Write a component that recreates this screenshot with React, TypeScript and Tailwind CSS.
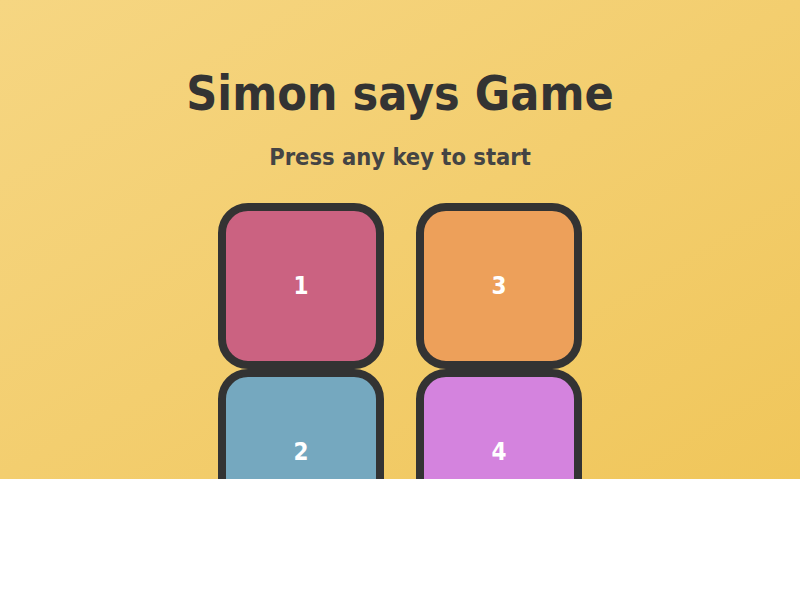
const buttons = [
  { id: 1, color: 'bg-[#cb6281]' },
  { id: 3, color: 'bg-[#eda05a]' },
  { id: 2, color: 'bg-[#75a8bf]' },
  { id: 4, color: 'bg-[#d483de]' },
];

export default function App() {
  return (
    <div
      className="h-[479px] overflow-hidden bg-gradient-to-br from-[#f6d682] to-[#f0c65a] text-center text-[#333]"
      style={{ fontFamily: '"DejaVu Sans Condensed", "DejaVu Sans", sans-serif' }}
    >
      <h1 className="pt-[67px] text-[48px] font-bold leading-[52px]">Simon says Game</h1>
      <h3 className="mt-[24px] text-[23.5px] font-bold leading-[28px] text-[#444]">Press any key to start</h3>
      <div className="mx-auto mt-[32px] grid w-[364px] grid-cols-2 gap-x-[32px]">
        {buttons.map((b) => (
          <div
            key={b.id}
            className={`flex h-[166px] w-[166px] items-center justify-center rounded-[30px] border-[8px] border-[#333] ${b.color} text-[24px] font-bold text-white`}
          >
            {b.id}
          </div>
        ))}
      </div>
    </div>
  );
}
